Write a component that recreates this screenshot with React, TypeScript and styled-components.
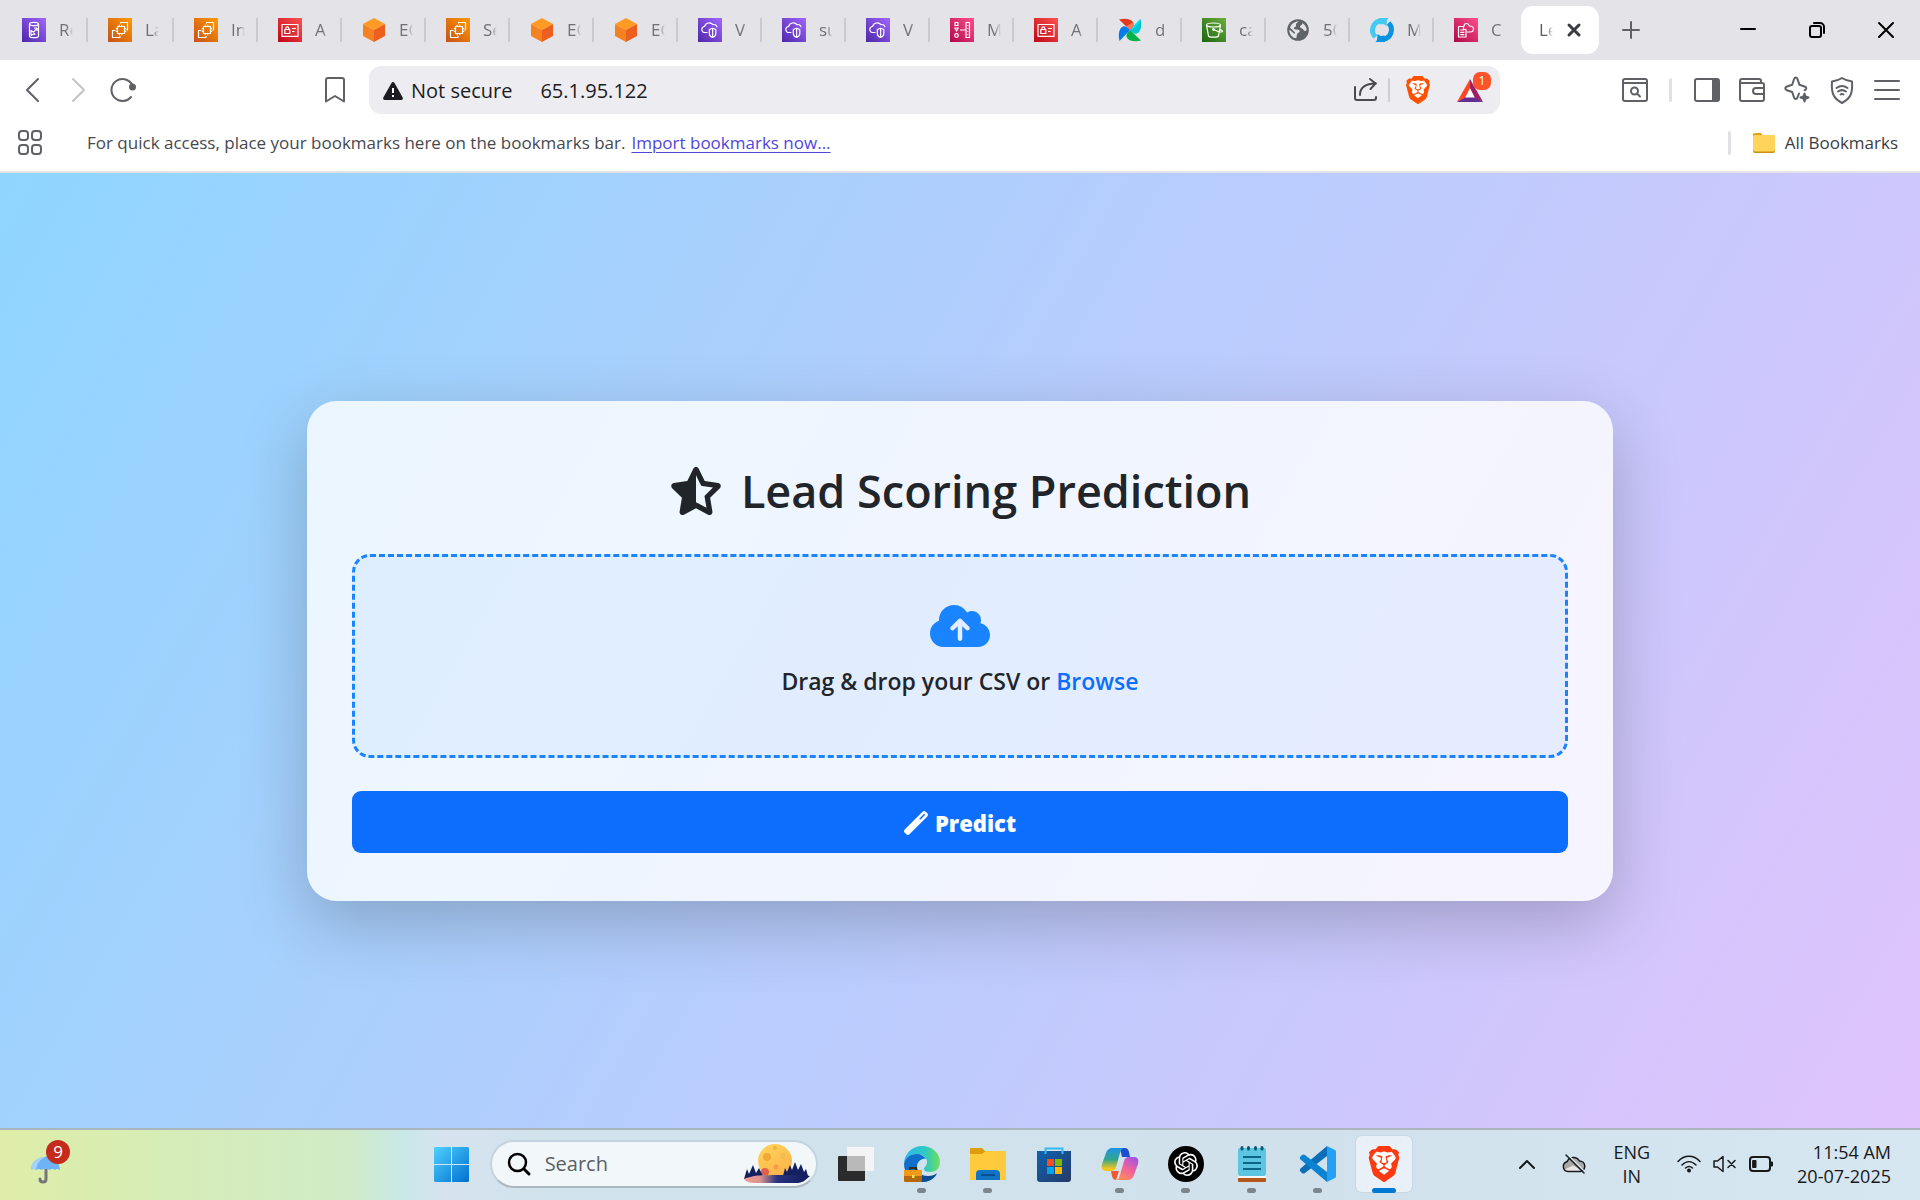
import React from "react";
import styled, { createGlobalStyle } from "styled-components";
import { FaStarHalfStroke, FaCloudArrowUp, FaWandMagic } from "react-icons/fa6";
import { SiBrave, SiOpenai } from "react-icons/si";

const Global = createGlobalStyle`
  *, *::before, *::after { box-sizing: border-box; }
  body { margin: 0; font-family: "Open Sans", "Noto Sans", sans-serif; }
  button, input { font-family: inherit; }
`;

const Screen = styled.div`
  display: flex;
  flex-direction: column;
  height: 100vh;
  overflow: hidden;
`;

const IconButton = styled.button<{ $w?: number; $color?: string }>`
  display: flex;
  flex: none;
  align-items: center;
  justify-content: center;
  width: ${(p) => p.$w ?? 45}px;
  height: 45px;
  padding: 0;
  border: 0;
  background: none;
  color: ${(p) => p.$color ?? "#5f6167"};
`;

const Line = styled.svg`
  display: block;
  flex: none;
  overflow: visible;
  fill: none;
  stroke: currentColor;
  stroke-width: 2;
  stroke-linecap: round;
  stroke-linejoin: round;
`;

const Art = styled.svg`
  display: block;
  flex: none;
  overflow: visible;
`;

/* ---------- tab strip ---------- */

const TabStrip = styled.div`
  display: flex;
  flex: none;
  align-items: center;
  height: 60px;
  padding-left: 2px;
  background: #e4e3e8;
`;

const Tab = styled.button<{ $wide: boolean; $last: boolean }>`
  display: flex;
  flex: none;
  align-items: center;
  gap: 13px;
  width: ${(p) => (p.$wide ? 86 : 84)}px;
  height: 24px;
  padding: 0 0 0 20px;
  border: 0;
  border-right: 2px solid ${(p) => (p.$last ? "transparent" : "#cbcacf")};
  background: none;
  color: #707178;
`;

const TabTitle = styled.span`
  width: 14px;
  overflow: hidden;
  font-size: 17px;
  line-height: 24px;
  text-align: left;
  white-space: nowrap;
  mask-image: linear-gradient(90deg, #000 55%, transparent);
`;

const ActiveTab = styled.div`
  display: flex;
  flex: none;
  align-items: center;
  gap: 9px;
  width: 78px;
  height: 48px;
  margin-left: 3px;
  padding-left: 18px;
  border-radius: 12px;
  background: #fff;
  color: #5c5d63;
`;

const Tiled = styled.svg<{ $from: string; $to: string }>`
  display: block;
  flex: none;
  width: 24px;
  height: 24px;
  background: linear-gradient(45deg, ${(p) => p.$from}, ${(p) => p.$to});
  fill: none;
  stroke: #fff;
  stroke-width: 1.2;
  stroke-linejoin: round;
`;

const WindowControls = styled.div`
  display: flex;
  margin-left: auto;
`;

type Kind = "db" | "ec2" | "iam" | "cube" | "vpc" | "msk" | "pinwheel" | "s3" | "globe" | "sync" | "stack";

function Favicon({ kind }: { kind: Kind }) {
  switch (kind) {
    case "db":
      return (
        <Tiled viewBox="0 0 24 24" $from="#4d27a8" $to="#a166ff">
          <ellipse cx="12" cy="6" rx="4.500" ry="1.700" />
          <path d="M7.500 6v12c0 1 2 1.700 4.500 1.700s4.500-.7 4.500-1.700V6M9 17.500v-5l2.500 1.700 3.500-4M15 10v3M15 10h-3M9 17.500l3.500-2 .5 1.500" />
        </Tiled>
      );
    case "ec2":
      return (
        <Tiled viewBox="0 0 24 24" $from="#c8511b" $to="#ff9900">
          <path d="M9.500 8.500h7v7h-7zM11.300 8.500v-1.800M13.700 8.500v-1.800M11.300 17.200v-1.700M13.700 17.200v-1.700M16.500 10.700h1.700M16.500 13.300h1.700M7.800 10.700h1.700M7.800 13.300h1.700" />
          <path d="M12.500 5.500v-1h7v7.500h-1M7.500 12.500h-3v7h7.500v-1.500" />
        </Tiled>
      );
    case "iam":
      return (
        <Tiled viewBox="0 0 24 24" $from="#bd0816" $to="#ff5252">
          <path d="M4 6.500h16v11.800H4zM6.800 11.500h5v4h-5zM7.800 11.500v-1.200a1.500 1.500 0 0 1 3 0v1.200M14 10.500h4M14 13.500h2.500" />
        </Tiled>
      );
    case "cube":
      return (
        <Art width="24" height="24" viewBox="0 0 24 24">
          <path fill="#ff9b24" d="M12 0l11 6-11 6L1 6z" />
          <path fill="#f58220" d="M1 6l11 6v12L1 18z" />
          <path fill="#ec5f1c" d="M23 6l-11 6v12l11-6z" />
        </Art>
      );
    case "vpc":
      return (
        <Tiled viewBox="0 0 24 24" $from="#4d27a8" $to="#a166ff">
          <path d="M9.500 14.500H7a3 3 0 0 1-.4-6A4.800 4.800 0 0 1 15 6.700a3 3 0 0 1 4 2.600" />
          <path d="M11.300 11.500l3.300-1.200 3.200 1.200v4c0 2-1.300 3.200-3.200 4-2-.8-3.300-2-3.300-4zM14.600 10.500v9" />
        </Tiled>
      );
    case "msk":
      return (
        <Tiled viewBox="0 0 24 24" $from="#b0084d" $to="#ff4f8b">
          <path d="M5 4.500h3v3H5zM4.800 10h3.500l-1.700 3z" />
          <circle cx="6.500" cy="17.500" r="1.800" />
          <path d="M19.500 4.500H16v15h3.500zM10 12h6M17.800 7v.8M17.800 10v.8M17.800 13v.8M17.800 16v.8" />
        </Tiled>
      );
    case "pinwheel":
      return (
        <Art width="24" height="24" viewBox="0 0 24 24">
          <path fill="#e43921" d="M12 12L1 1.500C5 .5 12 0 15 4c1.500 2.500.5 5-3 8z" />
          <path fill="#00c7d4" d="M12 12L22.500 1c1 4 1.500 11-2.500 14-2.500 1.500-5 .5-8-3z" />
          <path fill="#04b24a" d="M12 12l11 10.500c-4 1-11 1.500-14-2.500-1.500-2.500-.5-5 3-8z" />
          <path fill="#017cee" d="M12 12L1.500 23C.500 19 0 12 4 9c2.500-1.500 5-.5 8 3z" />
          <path fill="#ff7557" d="M12 12L8 8c2-.5 4-2 7-4 1.500 2.500.5 5-3 8z" />
          <path fill="#11e1ee" d="M12 12l4-4c1-2 4-5 6.500-7-1 4-5 9-10.500 11z" />
        </Art>
      );
    case "s3":
      return (
        <Tiled viewBox="0 0 24 24" $from="#1b660f" $to="#6cae3e">
          <ellipse cx="11.500" cy="7" rx="7" ry="2" />
          <path d="M4.500 7l2 11c.5 1.500 9.500 1.500 10 0l2-11M11.500 11.500c4 2 7 3 8.500 2.300s-1.200-2-2.300-2.600" />
          <circle cx="11.500" cy="11.500" r=".8" />
        </Tiled>
      );
    case "globe":
      return (
        <Art width="24" height="24" viewBox="0 0 24 24">
          <circle cx="12" cy="12" r="10.800" fill="#5f6368" />
          <path
            fill="#e4e3e8"
            d="M13 3.500c-1.500 1-3.500 1.500-3 3.500.8 2-2 1.500-2 3.500 0 1.500 3.500.5 5 1.500s.5 2.500-1 3-1 3-1.700 5.300C6 20 3.200 16 3.300 11.500L8 15.500c1 .5 1.500-.5.5-1.500L4 9.500C5.300 5.500 9 3.200 13 3.500zM16 5c3 1.500 4.500 4 4.700 7-1 1.500-3 1-3.500-.5s-3-1-3.200-2.700S17 7.500 16 5z"
          />
        </Art>
      );
    case "sync":
      return (
        <Art width="24" height="24" viewBox="0 0 24 24" fill="none">
          <path stroke="#43c9f2" strokeWidth="5" d="M5.500 19A9.500 9.500 0 0 1 11 2.700" />
          <path stroke="#0894e2" strokeWidth="5" d="M18.500 5A9.500 9.500 0 0 1 13 21.300" />
          <path fill="#43c9f2" d="M9 0h9.500l-1.500 2-.5 6-3-2-4 .5z" />
          <path fill="#0894e2" d="M15 24H5.500l1.500-2 .5-6 3 2 4-.5z" />
        </Art>
      );
    case "stack":
      return (
        <Tiled viewBox="0 0 24 24" $from="#b0084d" $to="#ff4f8b">
          <path d="M4.500 8.500h5v3h2.500v7.500H4.500zM6.300 12h3.500M6.300 14.300h4M6.300 16.600h4" />
          <path d="M10 8.500c0-2 1-3 2.500-3s2.500 1 3 2.500c2.500 0 4 1 4 3s-1.500 3-3.500 3h-3" />
        </Tiled>
      );
  }
}

const tabs: { kind: Kind; title: string }[] = [
  { kind: "db", title: "Re" },
  { kind: "ec2", title: "La" },
  { kind: "ec2", title: "In" },
  { kind: "iam", title: "A" },
  { kind: "cube", title: "EC" },
  { kind: "ec2", title: "Se" },
  { kind: "cube", title: "EC" },
  { kind: "cube", title: "EC" },
  { kind: "vpc", title: "V" },
  { kind: "vpc", title: "su" },
  { kind: "vpc", title: "V" },
  { kind: "msk", title: "M" },
  { kind: "iam", title: "A" },
  { kind: "pinwheel", title: "d" },
  { kind: "s3", title: "ca" },
  { kind: "globe", title: "50" },
  { kind: "sync", title: "M" },
  { kind: "stack", title: "C" },
];

/* ---------- toolbar ---------- */

const Toolbar = styled.div`
  display: flex;
  flex: none;
  align-items: center;
  height: 60px;
  padding: 0 11px 0 10px;
  background: #fff;
`;

const AddressArea = styled.div`
  display: flex;
  flex: 1;
  align-items: center;
  gap: 12px;
  padding: 0 112px 0 167px;
`;

const AddressBar = styled.div`
  display: flex;
  flex: 1;
  align-items: center;
  height: 48px;
  padding: 0 6px 0 14px;
  border-radius: 12px;
  background: #edecf1;
`;

const Security = styled.button`
  display: flex;
  flex: none;
  align-items: center;
  gap: 8px;
  padding: 2px 0 0;
  border: 0;
  background: none;
  color: #1c1c22;
  font-size: 20px;
  line-height: 28px;
`;

const AddressInput = styled.input`
  flex: 1;
  min-width: 0;
  margin-left: 28px;
  padding: 2px 0 0;
  border: 0;
  outline: 0;
  background: none;
  color: #1c1c22;
  font-size: 20px;
  line-height: 28px;
`;

const Divider = styled.span<{ $w?: number; $color?: string }>`
  flex: none;
  width: ${(p) => p.$w ?? 3}px;
  height: 24px;
  border-radius: 2px;
  background: ${(p) => p.$color ?? "#e1e0e6"};
`;

const RewardsButton = styled(IconButton)`
  position: relative;
`;

const RewardsCount = styled.span`
  position: absolute;
  top: 4px;
  right: 3px;
  width: 18px;
  height: 18px;
  border-radius: 7px;
  background: #fb542b;
  color: #fff;
  font-size: 12px;
  line-height: 18px;
  text-align: center;
`;

const LionMark = styled.span<{ $size: number; $color: string }>`
  display: flex;
  color: ${(p) => p.$color};
  font-size: ${(p) => p.$size}px;
  background: radial-gradient(circle, #fff 48%, transparent 49%);
`;

/* ---------- bookmarks bar ---------- */

const Bookmarks = styled.div`
  display: flex;
  flex: none;
  align-items: center;
  height: 53px;
  padding: 0 22px 6px 18px;
  border-bottom: 2px solid #e4e4e8;
  background: #fff;
  color: #47484e;
  font-size: 17px;
  line-height: 24px;
`;

const Hint = styled.p`
  margin: 0 auto 0 45px;
`;

const ImportLink = styled.a`
  margin-left: 6px;
  color: #4f46dc;
  text-decoration: underline;
  text-underline-offset: 3px;
`;

const AllBookmarks = styled.button`
  display: flex;
  align-items: center;
  gap: 9px;
  margin-left: 21px;
  padding: 0;
  border: 0;
  background: none;
  color: #3c3d43;
  font-size: 17px;
  line-height: 24px;
`;

/* ---------- web page ---------- */

const Page = styled.main`
  display: flex;
  flex: 1;
  align-items: center;
  justify-content: center;
  min-height: 0;
  background: linear-gradient(120deg, #8fd6fe 0%, #e0c3fc 100%);
`;

const Card = styled.form`
  display: flex;
  flex-direction: column;
  width: 68%;
  padding: 58px 45px 48px;
  border-radius: 30px;
  background: rgba(255, 255, 255, 0.8);
  box-shadow: 0 22px 68px rgba(0, 0, 0, 0.22);
  color: #212529;
`;

const Title = styled.h1`
  display: flex;
  align-items: center;
  justify-content: center;
  gap: 18px;
  margin: 0 0 31px;
  font-size: 45px;
  font-weight: 600;
  line-height: 64px;

  svg {
    width: 54px;
    height: 48px;
  }
`;

const DropZone = styled.div`
  display: flex;
  flex-direction: column;
  align-items: center;
  gap: 15px;
  height: 204px;
  padding-top: 45px;
  border: 3px dashed #1a84ff;
  border-radius: 18px;
  background: rgba(0, 123, 255, 0.06);
  color: #1a84ff;

  svg {
    width: 60px;
    height: 48px;
  }
`;

const DropText = styled.p`
  margin: 0;
  color: #212529;
  font-size: 23px;
  font-weight: 600;
  line-height: 32px;
`;

const Browse = styled.label`
  color: #0d6efd;
  cursor: pointer;
`;

const FileInput = styled.input`
  display: none;
`;

const Predict = styled.button`
  display: flex;
  align-items: center;
  justify-content: center;
  gap: 7px;
  height: 62px;
  margin-top: 33px;
  padding: 2px 0 0;
  border: 0;
  border-radius: 9px;
  background: #0d6efd;
  color: #fff;
  font-size: 22px;
  font-weight: 800;
  line-height: 32px;

  svg {
    width: 24px;
    height: 24px;
  }
`;

/* ---------- taskbar ---------- */

const Taskbar = styled.footer`
  display: grid;
  flex: none;
  grid-template-columns: 5fr auto 6fr;
  align-items: center;
  height: 72px;
  padding-bottom: 2px;
  border-top: 2px solid #aab6bd;
  background: linear-gradient(90deg, #dfeda8 0, #d8edb2 120px, #d4ecbd 230px, #d0ebc6 350px, #c8e8ea 405px, #d6e3ee 440px, #d1e3ec 560px, #d0e1ec 1300px, #d7e7f2 1920px);
`;

const WidgetButton = styled.button`
  position: relative;
  width: 34px;
  height: 48px;
  margin-left: 30px;
  padding: 0;
  border: 0;
  background: none;
`;

const WidgetCount = styled.span`
  position: absolute;
  top: 0;
  left: 16px;
  width: 24px;
  height: 24px;
  border-radius: 50%;
  background: #c42b1c;
  color: #fff;
  font-size: 17px;
  line-height: 24px;
  text-align: center;
`;

const Apps = styled.nav`
  display: flex;
  align-items: center;
  gap: 10px;
`;

const SearchBox = styled.label`
  display: flex;
  align-items: center;
  width: 328px;
  height: 48px;
  padding: 0 6px 0 16px;
  border: 2px solid #c3d3df;
  border-bottom-color: #abb8c2;
  border-radius: 24px;
  background: #f2f7fa;
`;

const SearchInput = styled.input`
  flex: 1;
  min-width: 0;
  margin-left: 15px;
  padding: 0;
  border: 0;
  outline: 0;
  background: none;
  font-size: 20px;
  line-height: 28px;

  &::placeholder {
    color: #5b5f63;
    opacity: 1;
  }
`;

const TaskButton = styled.button<{ $active?: boolean }>`
  position: relative;
  display: flex;
  flex: none;
  align-items: center;
  justify-content: center;
  width: 56px;
  height: 56px;
  padding: 0;
  border: 0;
  border-radius: 6px;
  background: ${(p) => (p.$active ? "#e9f0f7" : "none")};
  box-shadow: ${(p) => (p.$active ? "0 0 0 1px #c8d8e2" : "none")};
`;

const Running = styled.span<{ $active?: boolean }>`
  position: absolute;
  bottom: -1px;
  width: ${(p) => (p.$active ? 24 : 9)}px;
  height: 5px;
  border-radius: 3px;
  background: ${(p) => (p.$active ? "#0078d4" : "#7b858c")};
`;

const Tray = styled.div`
  display: flex;
  align-items: center;
  justify-content: flex-end;
  padding-right: 29px;
  color: #17191b;
`;

const TrayButton = styled.button<{ $gap: number }>`
  display: flex;
  align-items: center;
  gap: 12px;
  margin-left: ${(p) => p.$gap}px;
  padding: 0;
  border: 0;
  background: none;
  color: inherit;
`;

const TrayText = styled.div<{ $align: string; $gap: number }>`
  display: flex;
  flex-direction: column;
  margin-left: ${(p) => p.$gap}px;
  font-size: 18px;
  line-height: 24px;
  text-align: ${(p) => p.$align};
`;

function Moonrise() {
  return (
    <Art width="66" height="40" viewBox="0 0 66 40">
      <defs>
        <linearGradient id="moon" x1="0" y1="0" x2="0.6" y2="1">
          <stop offset="0" stopColor="#ffd65a" />
          <stop offset="1" stopColor="#fdb44b" />
        </linearGradient>
        <linearGradient id="shore">
          <stop offset="0" stopColor="#f3a08f" />
          <stop offset="0.25" stopColor="#d8918f" />
          <stop offset="0.5" stopColor="#29337d" />
          <stop offset="1" stopColor="#101c5c" />
        </linearGradient>
      </defs>
      <circle cx="31" cy="17" r="17" fill="url(#moon)" />
      <circle cx="23" cy="13" r="4" fill="#f0a936" />
      <circle cx="39" cy="12" r="3" fill="#f2bd50" />
      <circle cx="31" cy="4" r="2" fill="#f0b243" />
      <circle cx="32" cy="23" r="2.500" fill="#f79a4c" />
      <circle cx="21" cy="28" r="4" fill="#e2604b" />
      <path fill="#14205f" d="M0 35l3-10 2 5 4-9 3 8 3-5 4 8-4 1zM39 32l2-8 2 4 3-7 2 5 3-8 3 8 3-6 3 8 2-3 2 7z" />
      <path fill="url(#shore)" d="M0 35c14-5 20-3 28-4h32l6 1c-6 5-7 7-14 7H12C6 39 2 38 0 35z" />
    </Art>
  );
}

function Edge() {
  return (
    <Art width="36" height="36" viewBox="0 0 36 36">
      <defs>
        <linearGradient id="edgeTop">
          <stop offset="0" stopColor="#2ab8f0" />
          <stop offset="0.6" stopColor="#2fc9c0" />
          <stop offset="1" stopColor="#6fe05a" />
        </linearGradient>
      </defs>
      <path fill="url(#edgeTop)" d="M0 18C0 8 8 0 18 0s18 7 18 16c0 7-5 10-10 10-4 0-6-1-6-3s3-3 3-7c0-5-5-8-10-8C6 8 1 12 0 18z" />
      <path fill="#0f6fc9" d="M0 18C1 12 6 8 13 8c4 0 7 2 9 5-5-1-9 3-9 8 0 6 5 10 11 10 4 0 6-1 9-3-3 5-8 8-15 8C8 36 0 28 0 18z" />
      <path fill="#0c4a94" d="M13 21c0 6 5 9 11 9 4 0 7-1 9-3-3 6-9 9-15 9-4-3-6-9-5-15z" />
      <rect y="24" width="18" height="12" rx="1" fill="#b5690c" />
      <rect y="24" width="18" height="6" fill="#f09a1c" />
      <path d="M6 24v-2h6v2" fill="none" stroke="#3b2a18" strokeWidth="2" />
      <rect x="8" y="29" width="2.500" height="3" fill="#ffe14a" />
    </Art>
  );
}

function Copilot() {
  return (
    <Art width="36" height="32" viewBox="0 0 36 32">
      <defs>
        <linearGradient id="copA" x1="0" y1="0" x2="0" y2="1">
          <stop offset="0" stopColor="#1e93e8" />
          <stop offset="0.5" stopColor="#33a58d" />
          <stop offset="0.9" stopColor="#f2c61c" />
        </linearGradient>
        <linearGradient id="copB" x1="0.8" y1="0" x2="0.2" y2="1">
          <stop offset="0" stopColor="#a152e8" />
          <stop offset="0.5" stopColor="#f0629a" />
          <stop offset="1" stopColor="#ff8f55" />
        </linearGradient>
      </defs>
      <path fill="#1b4fd0" d="M18 0h5c2 0 3 1 4 4l1 5h-8z" />
      <path fill="#ef5a35" d="M9 23h8l-3 9c-2 0-3-1-4-4z" />
      <path fill="url(#copA)" d="M11 0h11c-2 0-3 2-4 5l-4 14c-1 3-2 4-5 4H4c-4 0-5-3-4-7L4 5c1-3 3-5 7-5z" />
      <path fill="url(#copB)" d="M25 32H14c2 0 3-2 4-5l4-14c1-3 2-4 5-4h5c4 0 5 3 4 7l-4 11c-1 3-3 5-7 5z" />
    </Art>
  );
}

export default function App() {
  return (
    <Screen>
      <Global />

      <TabStrip>
        {tabs.map((t, i) => (
          <Tab key={i} $wide={i < 2} $last={i === tabs.length - 1}>
            <Favicon kind={t.kind} />
            <TabTitle>{t.title}</TabTitle>
          </Tab>
        ))}
        <ActiveTab>
          <TabTitle>Le</TabTitle>
          <IconButton $w={24} $color="#3a3b40" aria-label="Close tab">
            <Line width="10" height="10" viewBox="0 0 10 10">
              <path d="M0 0l10 10M10 0L0 10" strokeWidth="3" />
            </Line>
          </IconButton>
        </ActiveTab>
        <IconButton $w={64} aria-label="New tab">
          <Line width="16" height="16" viewBox="0 0 16 16">
            <path d="M8 0v16M0 8h16" />
          </Line>
        </IconButton>
        <WindowControls>
          <IconButton $w={69} $color="#000" aria-label="Minimize">
            <Line width="14" height="14" viewBox="0 0 14 14">
              <path d="M0 6h14" />
            </Line>
          </IconButton>
          <IconButton $w={69} $color="#000" aria-label="Restore">
            <Line width="14" height="14" viewBox="0 0 14 14">
              <rect x="0" y="3" width="11" height="11" rx="2" />
              <path d="M4 0h6a4 4 0 0 1 4 4v6" />
            </Line>
          </IconButton>
          <IconButton $w={69} $color="#000" aria-label="Close">
            <Line width="14" height="14" viewBox="0 0 14 14">
              <path d="M0 0l14 14M14 0L0 14" />
            </Line>
          </IconButton>
        </WindowControls>
      </TabStrip>

      <Toolbar>
        <IconButton aria-label="Back">
          <Line width="12" height="22" viewBox="0 0 12 22">
            <path d="M11 0L0 11l11 11" />
          </Line>
        </IconButton>
        <IconButton $color="#c4c4c8" aria-label="Forward">
          <Line width="12" height="22" viewBox="0 0 12 22">
            <path d="M1 0l11 11L1 22" />
          </Line>
        </IconButton>
        <IconButton aria-label="Reload">
          <Line width="26" height="26" viewBox="0 0 26 26">
            <path d="M22 7.500A11 11 0 1 0 21 20" />
            <circle cx="22.500" cy="10" r="2.500" fill="currentColor" />
          </Line>
        </IconButton>
        <AddressArea>
          <IconButton aria-label="Bookmark this page">
            <Line width="18" height="24" viewBox="0 0 18 24">
              <path d="M2 0h14a2 2 0 0 1 2 2v21.500L9 18l-9 5.500V2a2 2 0 0 1 2-2z" />
            </Line>
          </IconButton>
          <AddressBar>
            <Security>
              <Art width="20" height="18" viewBox="0 0 20 18">
                <path fill="#1c1c22" d="M8.500 1a1.700 1.700 0 0 1 3 0l8.200 14.500A1.700 1.700 0 0 1 18.200 18H1.800A1.700 1.700 0 0 1 .3 15.500z" />
                <path stroke="#fff" strokeWidth="2" d="M10 6v5M10 13v2" />
              </Art>
              Not secure
            </Security>
            <AddressInput aria-label="Address" defaultValue="65.1.95.122" />
            <IconButton $color="#4a4b50" aria-label="Share">
              <Line width="24" height="24" viewBox="0 0 24 24">
                <path d="M1 9v11a2 2 0 0 0 2 2h17a2 2 0 0 0 2-2v-1M6 17c0-7 5-11.500 16-11.500M16 1l5.500 4.500L16.500 11" />
              </Line>
            </IconButton>
            <Divider $w={2} $color="#cfced4" />
            <IconButton $w={56} aria-label="Brave Shields">
              <LionMark $size={28} $color="#ff5000">
                <SiBrave />
              </LionMark>
            </IconButton>
            <RewardsButton $w={48} aria-label="Brave Rewards">
              <Art width="26" height="23" viewBox="0 0 26 23">
                <path fill="#fff" d="M13 9l5 10H8z" />
                <path fill="#ff4724" d="M13 0v9L8 19l-8 4z" />
                <path fill="#9e1f63" d="M13 0v9l5 10 8 4z" />
                <path fill="#662d91" d="M0 23l8-4.500h10l8 4.500z" />
              </Art>
              <RewardsCount>1</RewardsCount>
            </RewardsButton>
          </AddressBar>
        </AddressArea>
        <IconButton aria-label="Find in page">
          <Line width="24" height="22" viewBox="0 0 24 22">
            <rect width="24" height="22" rx="2" />
            <path d="M0 4h24" />
            <circle cx="11.500" cy="12" r="3.500" />
            <path d="M14 14.500l3 3" />
          </Line>
        </IconButton>
        <IconButton as="span" $w={27}>
          <Divider />
        </IconButton>
        <IconButton aria-label="Sidebar">
          <Line width="24" height="22" viewBox="0 0 24 22">
            <rect width="24" height="22" rx="2" />
            <path fill="currentColor" d="M18 1h5v20h-5z" />
          </Line>
        </IconButton>
        <IconButton aria-label="Wallet">
          <Line width="24" height="22" viewBox="0 0 24 22">
            <path d="M0 2v18a2 2 0 0 0 2 2h20a2 2 0 0 0 2-2V6a2 2 0 0 0-2-2H2a2 2 0 0 1 0-4h17a2 2 0 0 1 2 2v2" />
            <path d="M24 9h-8a3 3 0 0 0-3 3 3 3 0 0 0 3 3h8" />
          </Line>
        </IconButton>
        <IconButton aria-label="Leo assistant">
          <Line width="24" height="24" viewBox="0 0 24 24">
            <path d="M14 17.500l-1.500 3.800c-.8 2.200-2.700 2.200-3.500 0L7.200 16 2 14.200c-2.300-.8-2.300-2.900 0-3.700L7.200 8.700 9 3.200c.8-2.300 2.700-2.300 3.500 0l1.900 5.500 5.200 1.800c2.300.8 2.300 2.900 0 3.700" transform="translate(0 -2)" />
            <path fill="currentColor" d="M19.500 15.500l1 3 3 1-3 1-1 3-1-3-3-1 3-1z" />
          </Line>
        </IconButton>
        <IconButton aria-label="VPN">
          <Line width="22" height="25" viewBox="0 0 22 25">
            <path d="M11 0c3 2 6 3 10 3.500.5 6 0 11-2 14.500s-5 5.500-8 7c-3-1.500-6-3.500-8-7S.500 9.500 1 3.500C5 3 8 2 11 0z" />
            <path d="M5.500 10c3.500-2.500 7.500-2.500 11 0M7 13.500c2.500-1.700 5.500-1.700 8 0M9.500 16.500c1-.7 2-.7 3 0" />
          </Line>
        </IconButton>
        <IconButton aria-label="Menu">
          <Line width="24" height="18" viewBox="0 0 24 18">
            <path d="M0 0h24M0 9h24M0 18h24" />
          </Line>
        </IconButton>
      </Toolbar>

      <Bookmarks>
        <IconButton $w={24} aria-label="Apps">
          <Line width="22" height="23" viewBox="0 0 22 23">
            <rect width="9" height="9" rx="3" />
            <rect x="13" width="9" height="9" rx="3" />
            <rect y="14" width="9" height="9" rx="3" />
            <rect x="13" y="14" width="9" height="9" rx="3" />
          </Line>
        </IconButton>
        <Hint>
          For quick access, place your bookmarks here on the bookmarks bar.
          <ImportLink href="#import">Import bookmarks now...</ImportLink>
        </Hint>
        <Divider />
        <AllBookmarks>
          <Art width="24" height="20" viewBox="0 0 24 20">
            <path fill="#dfa010" d="M1 2a2 2 0 0 1 2-2h6l2 3v5H1z" />
            <rect x="1" y="2" width="22" height="18" rx="2" fill="#c9920f" />
            <rect x="1" y="2" width="22" height="16.500" rx="2" fill="#ffd45a" />
          </Art>
          All Bookmarks
        </AllBookmarks>
      </Bookmarks>

      <Page>
        <Card onSubmit={(e) => e.preventDefault()}>
          <Title>
            <FaStarHalfStroke />
            Lead Scoring Prediction
          </Title>
          <DropZone>
            <FaCloudArrowUp />
            <DropText>
              Drag &amp; drop your CSV or <Browse htmlFor="csv">Browse</Browse>
            </DropText>
            <FileInput id="csv" type="file" accept=".csv" />
          </DropZone>
          <Predict type="submit">
            <FaWandMagic />
            Predict
          </Predict>
        </Card>
      </Page>

      <Taskbar>
        <WidgetButton aria-label="Weather">
          <Art width="34" height="48" viewBox="0 0 34 48">
            <path fill="none" stroke="#777" strokeWidth="3" strokeLinecap="round" d="M16 18v21c0 4-6 4-6 0" />
            <path fill="#6db3f6" d="M1 30C1 22 8 17 15.500 17S30 22 30 30c-2-1.500-4-1.500-5 0-2-1.500-4-1.500-5 0-2-1.500-7-1.500-9 0-1-1.500-3-1.500-5 0-1-1.500-3-1.500-5 0z" />
            <path fill="#a5d2fb" d="M1 30C1 22 8 17 15.500 17 9 20 7 24 6 30c-1-1.500-3-1.500-5 0z" />
          </Art>
          <WidgetCount>9</WidgetCount>
        </WidgetButton>

        <Apps>
          <TaskButton aria-label="Start">
            <Art width="35" height="35" viewBox="0 0 35 35">
              <defs>
                <linearGradient id="win" x1="0" y1="0" x2="1" y2="1">
                  <stop offset="0" stopColor="#4fd1ff" />
                  <stop offset="1" stopColor="#0070d0" />
                </linearGradient>
              </defs>
              <path fill="url(#win)" d="M1 0h16v17H0V1zM18 0h16l1 1v16H18zM0 18h17v17H1l-1-1zM18 18h17v16l-1 1H18z" />
            </Art>
          </TaskButton>
          <SearchBox>
            <Line width="22" height="22" viewBox="0 0 22 22">
              <circle cx="9.500" cy="9.500" r="8.500" strokeWidth="2.500" />
              <path d="M16 16l5 5" strokeWidth="3" />
            </Line>
            <SearchInput type="search" placeholder="Search" aria-label="Search" />
            <Moonrise />
          </SearchBox>
          <TaskButton aria-label="Task view">
            <Art width="36" height="34" viewBox="0 0 36 34">
              <rect y="9" width="27" height="25" rx="1" fill="#2b2b2b" />
              <rect x="9" width="27" height="24" rx="1" fill="#f4f4f4" />
              <path fill="#b9b9b9" d="M9 9h18v15H9z" />
            </Art>
          </TaskButton>
          <TaskButton aria-label="Edge">
            <Edge />
            <Running />
          </TaskButton>
          <TaskButton aria-label="File Explorer">
            <Art width="36" height="32" viewBox="0 0 36 32">
              <path fill="#dd9d0c" d="M0 1a1 1 0 0 1 1-1h11l4 4v5H0z" />
              <path fill="#ffcb3d" d="M0 6h12l4-3h20v28a1 1 0 0 1-1 1H1a1 1 0 0 1-1-1z" />
              <path fill="#0f73c6" d="M6 32v-6a4 4 0 0 1 4-4h16a4 4 0 0 1 4 4v6z" />
              <path stroke="#0a4d8f" strokeWidth="2" d="M11 27h14" />
            </Art>
            <Running />
          </TaskButton>
          <TaskButton aria-label="Microsoft Store">
            <Art width="36" height="36" viewBox="0 0 36 36">
              <defs>
                <linearGradient id="store" x1="0" y1="0" x2="1" y2="1">
                  <stop offset="0" stopColor="#0f62b0" />
                  <stop offset="1" stopColor="#263a66" />
                </linearGradient>
              </defs>
              <path fill="none" stroke="#35b9f1" strokeWidth="2" d="M9.500 8V2.500h17V8" />
              <path fill="url(#store)" d="M1 5h34v28a3 3 0 0 1-3 3H4a3 3 0 0 1-3-3z" />
              <path stroke="#35b9f1" strokeWidth="2" d="M9.500 5v3M26.500 5v3" />
              <path fill="#f25022" d="M11 13h7v7h-7z" />
              <path fill="#7fba00" d="M19 13h7v7h-7z" />
              <path fill="#00a4ef" d="M11 21h7v7h-7z" />
              <path fill="#ffb900" d="M19 21h7v7h-7z" />
            </Art>
          </TaskButton>
          <TaskButton aria-label="Copilot">
            <Copilot />
            <Running />
          </TaskButton>
          <TaskButton aria-label="ChatGPT">
            <Art width="36" height="36" viewBox="0 0 36 36">
              <circle cx="18" cy="18" r="18" fill="#000" />
              <SiOpenai x={6} y={6} size={24} color="#fff" />
            </Art>
            <Running />
          </TaskButton>
          <TaskButton aria-label="Notepad">
            <Art width="28" height="36" viewBox="0 0 28 36">
              <rect y="28" width="28" height="8" rx="1" fill="#b5561a" />
              <rect y="26" width="28" height="6" fill="#f6f6f6" />
              <rect y="2" width="28" height="28" rx="2" fill="#5cc6e0" />
              <path stroke="#0b6585" strokeWidth="2" d="M5 11h18M5 17h18M5 23h18" />
              <path stroke="#0b5a78" strokeWidth="3" strokeLinecap="round" d="M4 1.500v1.500M10.500 1.500v1.500M17.500 1.500v1.500M24 1.500v1.500" />
            </Art>
            <Running />
          </TaskButton>
          <TaskButton aria-label="Visual Studio Code">
            <Art width="36" height="36" viewBox="0 0 36 36">
              <path fill="#0b6eb8" d="M27 0v10L5 27c-1 .8-2 .6-3 0l-1.500-1.500c-1-1-.7-2 0-3z" />
              <path fill="#0b83d2" d="M27 36V26L5 9c-1-.8-2-.6-3 0L.5 10.500c-1 1-.7 2 0 3z" />
              <path fill="#26a0f2" d="M27 0l8 4c.7.3 1 .8 1 1.500v25c0 .7-.3 1.200-1 1.500l-8 4z" />
            </Art>
            <Running />
          </TaskButton>
          <TaskButton $active aria-label="Brave">
            <LionMark $size={36} $color="#fb3a12">
              <SiBrave />
            </LionMark>
            <Running $active />
          </TaskButton>
        </Apps>

        <Tray>
          <TrayButton $gap={0} aria-label="Show hidden icons">
            <Line width="14" height="8" viewBox="0 0 14 8">
              <path d="M0 8l7-7 7 7" />
            </Line>
          </TrayButton>
          <TrayButton $gap={28} aria-label="OneDrive">
            <Art width="24" height="18" viewBox="0 0 24 18" fill="none" strokeLinecap="round">
              <path fill="#a9a9a9" d="M6 16.500a5 5 0 0 1-1-9.800A7 7 0 0 1 17.500 6a5.300 5.300 0 0 1 1 10.500z" />
              <path fill="#e6e6e6" d="M2.500 14.500L11 10.500l9.500 5-2 1H6z" />
              <path stroke="#17191b" strokeWidth="1.500" d="M6 16.500a5 5 0 0 1-1-9.800A7 7 0 0 1 17.500 6a5.300 5.300 0 0 1 1 10.500z" />
              <path stroke="#d7e7f2" strokeWidth="1.500" d="M6 0l17 17" />
              <path stroke="#17191b" strokeWidth="1.500" d="M4 0l18 18" />
            </Art>
          </TrayButton>
          <TrayText $align="center" $gap={27}>
            <span>ENG</span>
            <span>IN</span>
          </TrayText>
          <TrayButton $gap={27} aria-label="Network, sound and battery">
            <Line width="24" height="18" viewBox="0 0 24 18">
              <path d="M1 6.500c6.500-7 15.500-7 22 0M5 10c4.500-4.500 9.500-4.500 14 0M8.500 13c2.300-2 4.700-2 7 0" strokeWidth="1.500" />
              <circle cx="12" cy="15.500" r="1" fill="currentColor" />
            </Line>
            <Line width="24" height="18" viewBox="0 0 24 18">
              <path d="M1 6h3.500L10 1.500v15L4.500 12H1zM15 5.500l7 7M22 5.500l-7 7" strokeWidth="1.500" />
            </Line>
            <Line width="24" height="16" viewBox="0 0 24 16">
              <rect x="1" y="1" width="20" height="14" rx="3" />
              <path fill="currentColor" strokeWidth="1" d="M4 4.500h3v7H4zM22 6h1.500v4H22z" />
            </Line>
          </TrayButton>
          <TrayText $align="right" $gap={24}>
            <span>11:54 AM</span>
            <span>20-07-2025</span>
          </TrayText>
        </Tray>
      </Taskbar>
    </Screen>
  );
}
